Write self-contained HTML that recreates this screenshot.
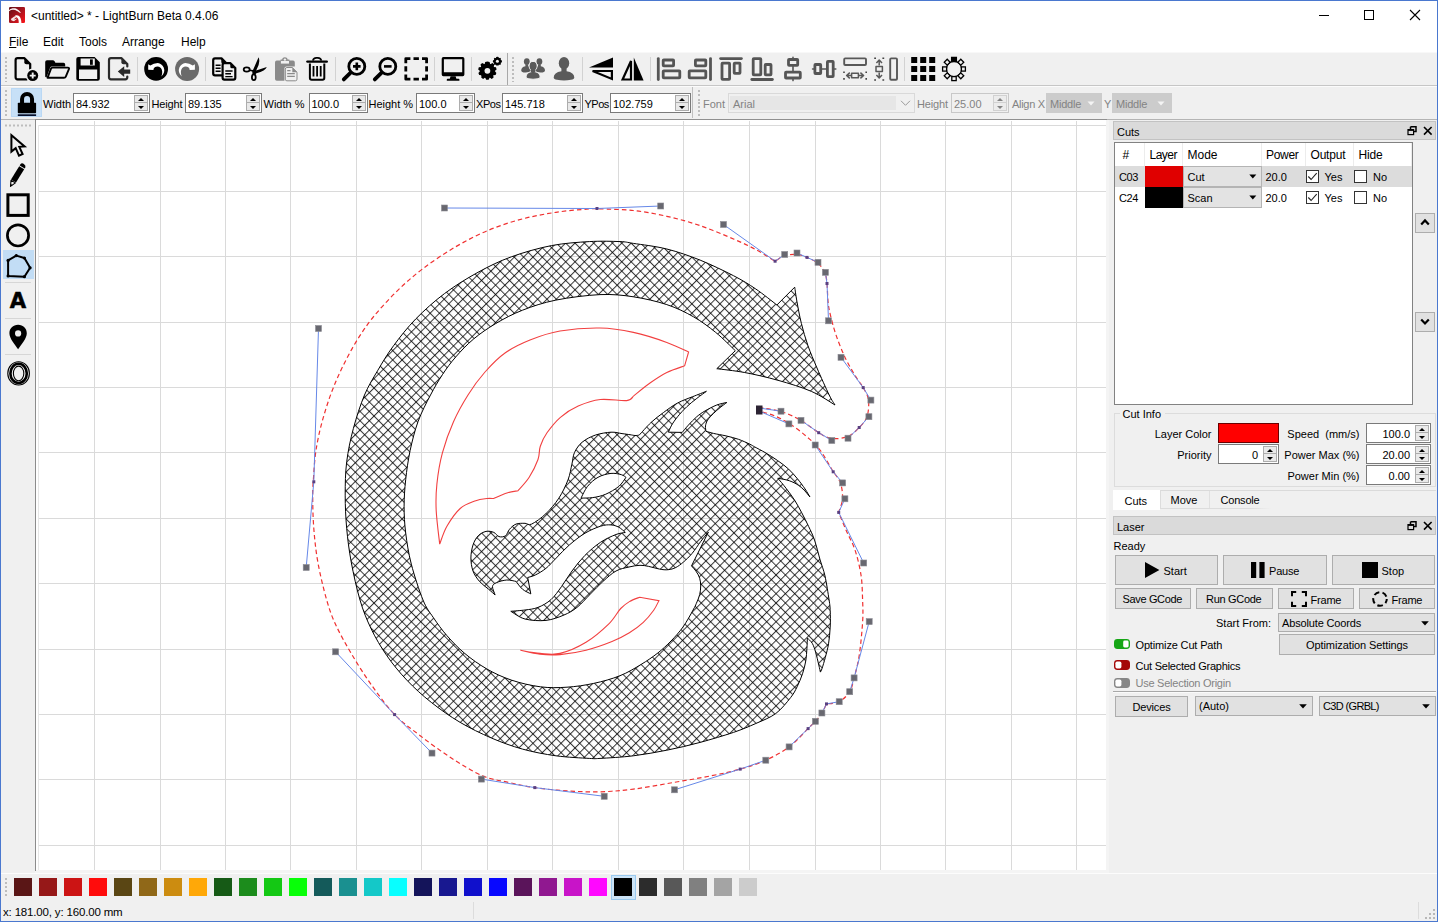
<!DOCTYPE html>
<html lang="en"><head><meta charset="utf-8"><title>LightBurn</title>
<style>
html,body{margin:0;padding:0;background:#f0f0f0;}
body{width:1438px;height:922px;overflow:hidden;font-family:"Liberation Sans",sans-serif;font-size:11px;color:#000;}
#win{position:relative;width:1438px;height:922px;background:#f0f0f0;overflow:hidden;}
.abs{position:absolute;}
.t{position:absolute;white-space:nowrap;line-height:1;}
.t11{font-size:11px;}
.t12{font-size:12px;}
.t13{font-size:13px;}
.gray{color:#838383;}
svg{position:absolute;overflow:visible;}
.spin{position:absolute;background:#fff;border:1px solid #7a7a7a;box-sizing:border-box;height:20px;}
.spin .v{position:absolute;left:2px;top:5px;font-size:11px;line-height:11px;white-space:nowrap;}
.spin .vr{position:absolute;right:20px;top:4px;font-size:11px;line-height:11px;white-space:nowrap;}
.spin .ud{position:absolute;right:1px;top:1px;width:14px;height:16px;}
.spin .ud i{position:absolute;left:0;width:12px;height:6px;border:1px solid #adadad;background:#e9e9e9;}
.spin .ud i.u{top:0;}
.spin .ud i.d{top:7px;height:7px;}
.spin .ud i:after{content:"";position:absolute;left:3px;top:1.5px;border-left:3px solid transparent;border-right:3px solid transparent;}
.spin .ud i.u:after{border-bottom:3px solid #000;}
.spin .ud i.d:after{border-top:3px solid #000;top:2.5px;}
.btn{position:absolute;box-sizing:border-box;background:#e1e1e1;border:1px solid #adadad;}
.sepv{position:absolute;width:1px;background:#d4d4d4;}
.grip{position:absolute;width:2px;}

</style></head>
<body>
<div id="win">
<!-- window frame -->
<div class="abs" style="left:0;top:0;width:1438px;height:52px;background:#fff;"></div>
<div class="abs" style="left:0;top:0;width:1438px;height:1px;background:#4a78cf;"></div>
<div class="abs" style="left:0;top:0;width:1px;height:922px;background:#4a78cf;"></div>
<div class="abs" style="left:1437px;top:0;width:1px;height:922px;background:#4a78cf;"></div>
<div class="abs" style="left:0;top:921px;width:1438px;height:1px;background:#4a78cf;"></div>
<!-- app icon -->
<svg style="left:9px;top:7px" width="16" height="16" viewBox="0 0 16 16">
  <defs><linearGradient id="ig" x1="0" y1="0" x2="1" y2="1"><stop offset="0" stop-color="#5e1016"/><stop offset="0.55" stop-color="#b0141e"/><stop offset="1" stop-color="#ff1418"/></linearGradient></defs>
  <rect x="0" y="0" width="16" height="16" rx="1.3" fill="url(#ig)"/>
  <path d="M0 3.2C2 1 6.5 0.6 8.6 2.5C10.2 3.6 11.4 4.8 11.9 5.9C10.4 5.6 9.5 4.7 8 3.9C5.5 2.5 2.5 2.4 0 4.2Z" fill="#fbf3f3"/>
  <path d="M6.2 8.4C8.5 7.6 10.7 8.6 11.5 11C12.2 13 12.4 14.6 12.4 16L9.7 16C9.9 14 9.5 12.2 8.5 11C7.9 10.3 7 9.9 6.2 9.9Z" fill="#fff"/>
  <path d="M1.8 12L5.6 9.3L7.2 10.4L4.6 12.5L8.4 11.6L5 14.3L2.6 13.6Z" fill="#f6e4e4"/>
</svg>
<div class="t t12" style="left:31px;top:10px;">&lt;untitled&gt; * - LightBurn Beta 0.4.06</div>
<!-- window buttons -->
<div class="abs" style="left:1319px;top:15px;width:10px;height:1px;background:#000;"></div>
<div class="abs" style="left:1364px;top:10px;width:8px;height:8px;border:1px solid #000;"></div>
<svg style="left:1409px;top:9px" width="12" height="12" viewBox="0 0 12 12"><path d="M1 1 L11 11 M11 1 L1 11" stroke="#000" stroke-width="1.1" fill="none"/></svg>
<!-- menu -->
<div class="t t12" style="left:9px;top:36px;"><span style="text-decoration:underline">F</span>ile</div>
<div class="t t12" style="left:43px;top:36px;">Edit</div>
<div class="t t12" style="left:79px;top:36px;">Tools</div>
<div class="t t12" style="left:122px;top:36px;">Arrange</div>
<div class="t t12" style="left:181px;top:36px;">Help</div>

<!-- toolbar 1 -->
<div class="abs" style="left:1px;top:52px;width:1436px;height:1px;background:#f8f8f8;"></div>
<div class="abs" style="left:1px;top:85px;width:1436px;height:1px;background:#c6c6c6;"></div>
<div class="abs" style="left:1px;top:86px;width:1436px;height:1px;background:#fbfbfb;"></div>
<div class="abs" style="left:507px;top:53px;width:1px;height:32px;background:#a8a8a8;"></div>
<svg style="left:0;top:52px" width="1100" height="36" viewBox="0 52 1100 36">
<g fill="#bdbdbd">
<path d="M5 57h2v2h-2zM5 61h2v2h-2zM5 65h2v2h-2zM5 69h2v2h-2zM5 73h2v2h-2zM5 77h2v2h-2zM5 81h2v1h-2z"/>
<path d="M512 57h2v2h-2zM512 61h2v2h-2zM512 65h2v2h-2zM512 69h2v2h-2zM512 73h2v2h-2zM512 77h2v2h-2zM512 81h2v1h-2z"/>
</g>
<g stroke="#d2d2d2" stroke-width="1" shape-rendering="crispEdges">
<path d="M137.5 57V81M205.5 57V81M335.5 57V81M434.5 57V81M471.5 57V81M582.5 57V81M650.5 57V81M904.5 57V81"/>
</g>
<!-- new -->
<g fill="none" stroke="#000" stroke-width="2.2" stroke-linejoin="round" stroke-linecap="round">
<path d="M27 79.3H17.6Q15.6 79.3 15.6 77.3V60.2Q15.6 58.2 17.6 58.2H24.5L30.2 64V69.5"/>
</g>
<path d="M24.3 58.3L30.2 64.2H26.3Q24.3 64.2 24.3 62.2Z" fill="#000"/>
<circle cx="32.7" cy="75.6" r="7" fill="#f0f0f0"/><circle cx="32.7" cy="75.6" r="5.5" fill="#000"/>
<path d="M32.7 72.6V78.6M29.7 75.6H35.7" stroke="#f0f0f0" stroke-width="1.9" fill="none"/>
<!-- open -->
<path d="M45.2 76.6V62Q45.2 60.2 47 60.2H52.8Q54 60.2 54.6 61.3L55.4 62.7H63.5Q65.2 62.7 65.2 64.4V66.4H52Q50.6 66.4 50.1 67.7L46.6 77.3Q45.2 77.6 45.2 76.6Z" fill="#000"/>
<path d="M47.5 77.8L51 68.6Q51.4 67.6 52.5 67.6H67.8Q69.5 67.6 68.9 69.2L65.8 76.6Q65.3 77.8 64 77.8Z" fill="none" stroke="#000" stroke-width="1.9" stroke-linejoin="round"/>
<!-- save -->
<path d="M78.3 57H94.6L99.8 62.2V78.8Q99.8 80.8 97.8 80.8H78.3Q76.3 80.8 76.3 78.8V59Q76.3 57 78.3 57ZM80.6 58.6V65.6H94.8V58.6ZM79 69.5V78.9H97.2V69.5Z" fill="#000" fill-rule="evenodd"/>
<rect x="90" y="59.4" width="2.8" height="5.4" fill="#000"/>
<!-- import -->
<g fill="none" stroke="#2a2a2a" stroke-width="2.2" stroke-linejoin="round" stroke-linecap="round">
<path d="M127.3 76.5V77.3Q127.3 79.3 125.3 79.3H111Q109 79.3 109 77.3V60.2Q109 58.2 111 58.2H121.6L127.3 64V66.5"/>
</g>
<path d="M121.4 58.3L127.3 64.2H123.4Q121.4 64.2 121.4 62.2Z" fill="#2a2a2a"/>
<path d="M117.8 71.6L124.2 66.3V69.5H130.2V73.7H124.2V76.9Z" fill="#2a2a2a"/>
<!-- undo -->
<circle cx="156.1" cy="68.9" r="11.9" fill="#000"/>
<path d="M148.2 64.2L150.3 65.4Q153.6 62.9 157.8 62.9Q161.8 63.4 163.7 67.4Q165.6 72 161.4 76.5Q163.3 71 160.9 68Q158 65.7 155.1 67Q153.4 68 153.4 69.9L148.2 69.7Z" fill="#fff"/>
<!-- redo -->
<circle cx="187.1" cy="69" r="12" fill="#6a6a6a"/>
<path d="M148.2 64.2L150.3 65.4Q153.6 62.9 157.8 62.9Q161.8 63.4 163.7 67.4Q165.6 72 161.4 76.5Q163.3 71 160.9 68Q158 65.7 155.1 67Q153.4 68 153.4 69.9L148.2 69.7Z" fill="#fff" transform="translate(343.1,0) scale(-1,1)"/>
<!-- copy -->
<g fill="#f0f0f0" stroke="#000" stroke-width="2.2" stroke-linejoin="round">
<path d="M215 58.4H221.5L226.4 63.3V73.5Q226.4 75.3 224.6 75.3H215Q213.2 75.3 213.2 73.5V60.2Q213.2 58.4 215 58.4Z"/>
<path d="M224.4 63.2H230.5L235.3 68V77.8Q235.3 79.6 233.5 79.6H224.4Q222.6 79.6 222.6 77.8V65Q222.6 63.2 224.4 63.2Z"/>
</g>
<path d="M221.3 58.5L226.3 63.5H222.8Q221.3 63.5 221.3 62ZM230.3 63.3L235.2 68.2H231.8Q230.3 68.2 230.3 66.7Z" fill="#000"/>
<path d="M215.6 65.3H220.6M215.6 68.3H220.6M215.6 71.3H220.6M225.3 71H232.6M225.3 73.8H231M225.3 76.6H232.6" stroke="#000" stroke-width="1.4" fill="none"/>
<!-- scissors -->
<g fill="none" stroke="#000" stroke-width="1.8">
<ellipse cx="246.7" cy="69.5" rx="3" ry="2.1"/>
<ellipse cx="253.8" cy="77.2" rx="1.9" ry="2.9"/>
</g>
<path d="M249.6 69.4L253 70L258.6 57.3Q260.8 62.6 256.2 70.6L266.8 66.9Q265.6 70.6 256.4 73.2L255.2 74.6L252.6 74.4L252.2 71.6L249.4 71Z" fill="#000"/>
<!-- paste -->
<path d="M276.8 60.6H280.6V59.6H282.2C282.4 56.6 287.4 56.6 287.6 59.6H289.4V60.6H293Q294.8 60.6 294.8 62.4V66.5H286.5Q284.4 66.5 284.4 68.6V80.8H276.8Q275 80.8 275 79V62.4Q275 60.6 276.8 60.6Z" fill="#8a8a8a"/>
<circle cx="284.9" cy="59.6" r="1.2" fill="#f0f0f0"/>
<path d="M280.9 60.9H289V63.6H280.9Z" fill="#f0f0f0"/>
<path d="M286.9 67.5H292.3L297 72.2V79.2Q297 80.8 295.4 80.8H286.9Q285.3 80.8 285.3 79.2V69.1Q285.3 67.5 286.9 67.5Z" fill="#f0f0f0" stroke="#8a8a8a" stroke-width="1"/>
<path d="M292.3 67.5L297 72.2H292.3Z" fill="#8a8a8a"/>
<path d="M287.2 70.6H290.5M287.2 73.6H294.8M287.2 76.4H294.8" stroke="#8a8a8a" stroke-width="1.3" fill="none"/>
<!-- trash -->
<path d="M312.9 60.6Q313.4 57.8 316.3 57.8H317.9Q320.8 57.8 321.3 60.6" fill="none" stroke="#000" stroke-width="1.8"/>
<path d="M307.4 61.6H326.8" stroke="#000" stroke-width="2.4" fill="none" stroke-linecap="round"/>
<path d="M309.9 63.4V78Q309.9 79.8 311.7 79.8H322.5Q324.3 79.8 324.3 78V63.4" fill="none" stroke="#000" stroke-width="2"/>
<path d="M313.5 66V76.6M317.1 66V76.6M320.7 66V76.6" stroke="#000" stroke-width="1.8" fill="none"/>
<!-- zoom in -->
<g fill="none" stroke="#000">
<circle cx="356.8" cy="66.4" r="8" stroke-width="2.8"/>
<path d="M350.4 72.8L343.8 79.4" stroke-width="3.8" stroke-linecap="round"/>
<path d="M356.8 62.6V70.2M353 66.4H360.6" stroke-width="2.6"/>
<circle cx="387.8" cy="66.4" r="8" stroke-width="2.8"/>
<path d="M381.4 72.8L374.8 79.4" stroke-width="3.8" stroke-linecap="round"/>
<path d="M384 66.4H391.6" stroke-width="2.6"/>
</g>
<!-- frame select -->
<path d="M405.8 63.2V58.6H410.40000000000003M413.5 58.6H418.9M422.0 58.6H426.6V63.2M426.6 66.2V71.6M426.6 74.60000000000001V79.2H422.0M418.9 79.2H413.5M410.40000000000003 79.2H405.8V74.60000000000001M405.8 71.6V66.2" fill="none" stroke="#000" stroke-width="2.8" stroke-linejoin="round"/>
<!-- monitor -->
<path d="M443.4 57H462.7Q464.4 57 464.4 58.7V74.6Q464.4 76.3 462.7 76.3H443.4Q441.7 76.3 441.7 74.6V58.7Q441.7 57 443.4 57ZM443.9 59.2V72.2H462.2V59.2Z" fill="#000" fill-rule="evenodd"/>
<path d="M450.6 76.3H455.6L456.4 78.8H458.6Q459.4 78.8 459.4 79.6V80.8H446.8V79.6Q446.8 78.8 447.6 78.8H449.8Z" fill="#000"/>
<!-- gears -->
<g fill="#000">
<path id="gearb" d="M485.6 63.3L488.4 63.1L489.3 65.2L491.7 63.9L493.7 65.9L492.4 68.3L494.5 69.2L494.3 72L492.1 72.7L493.1 75.2L490.9 77L488.7 75.5L487.4 77.5L484.7 77L484.3 74.7L481.7 75.4L480.2 73L482 71.1L480.1 69.6L481 67L483.4 67L483.1 64.4Z" transform="translate(0,0.6)"/>
<circle cx="487.4" cy="70.8" r="7" />
<path d="M487.4 61.6L489.6 61.9L490.2 64.2L492.6 63L494.3 64.5L493.6 66.9L496 67.3L496.6 69.5L494.8 71.1L496.4 72.9L495.6 75L493.2 75.2L493.6 77.6L491.7 78.9L489.7 77.6L488.6 79.8H486.2L485.1 77.6L483.1 78.9L481.2 77.6L481.6 75.2L479.2 75L478.4 72.9L480 71.1L478.2 69.5L478.8 67.3L481.2 66.9L480.5 64.5L482.2 63L484.6 64.2L485.2 61.9Z"/>
<circle cx="497.4" cy="61.3" r="3.4"/>
<path d="M497.4 56.8L498.6 57.1L498.9 58.3L500.1 57.8L501 58.7L500.5 59.9L501.7 60.2L502 61.3L501.7 62.5L500.5 62.8L501 64L500.1 64.9L498.9 64.4L498.6 65.6H496.2L495.9 64.4L494.7 64.9L493.8 64L494.3 62.8L493.1 62.5L492.8 61.3L493.1 60.2L494.3 59.9L493.8 58.7L494.7 57.8L495.9 58.3L496.2 57.1Z"/>
</g>
<circle cx="487.4" cy="70.8" r="2.9" fill="#f0f0f0"/>
<circle cx="497.4" cy="61.3" r="1.5" fill="#f0f0f0"/>
<!-- group -->
<g fill="#5a5a5a">
<ellipse cx="526.8" cy="61.6" rx="2.9" ry="3.4"/>
<path d="M521.2 70.6Q521.2 67 525.4 66.3V64.5H528.2V66.3Q532 67 532 70.6Q529 73 523.6 72.4Q521.2 72 521.2 70.6Z"/>
<ellipse cx="539.4" cy="61.6" rx="2.9" ry="3.4"/>
<path d="M545 70.6Q545 67 540.8 66.3V64.5H538V66.3Q534.2 67 534.2 70.6Q537.2 73 542.6 72.4Q545 72 545 70.6Z"/>
</g>
<g fill="#5a5a5a" stroke="#f0f0f0" stroke-width="1.1">
<ellipse cx="533.1" cy="66" rx="3.9" ry="4.6"/>
<path d="M526 77Q526 72.6 531.2 71.7V69.6H535V71.7Q540.2 72.6 540.2 77Q540.2 78.4 538 78.8Q533.1 79.6 528.2 78.8Q526 78.4 526 77Z"/>
</g>
<ellipse cx="533.1" cy="66" rx="3.4" ry="4.1" fill="#5a5a5a"/>
<path d="M530.9 69H535.3V72.4H530.9Z" fill="#5a5a5a"/>
<!-- user -->
<g fill="#5a5a5a">
<ellipse cx="564" cy="63.2" rx="5.2" ry="6.2"/>
<path d="M561.4 67.6H566.6V71.2Q574.3 72.4 574.3 77.4Q574.3 79.2 571 79.8Q564 81 557 79.8Q553.7 79.2 553.7 77.4Q553.7 72.4 561.4 71.2Z"/>
</g>
<!-- flip h -->
<path d="M589 67.6L613 57.4V67.6Z" fill="#000"/>
<path d="M592.6 71H611.9V78.9Z" fill="none" stroke="#000" stroke-width="2.2" stroke-linejoin="miter"/>
<!-- flip v -->
<path d="M631 61V79.5H622.6Z" fill="none" stroke="#000" stroke-width="2.2"/>
<path d="M633.8 57.4V80.6H643.6Z" fill="#000"/>
<!-- align icons -->
<g fill="none" stroke="#555" stroke-width="2.8" stroke-linejoin="round" stroke-linecap="round">
<path d="M658.3 58.6V79.6"/>
<rect x="663.2" y="60" width="10.4" height="5.8" rx="0.6"/>
<rect x="663.2" y="70.8" width="16.6" height="7" rx="0.6"/>
<path d="M710.5 58.6V79.6"/>
<rect x="695.4" y="60" width="10.4" height="5.8" rx="0.6"/>
<rect x="689.2" y="70.8" width="16.6" height="7" rx="0.6"/>
<path d="M720.6 58.6H741.4"/>
<rect x="722" y="63.2" width="7.6" height="16.2" rx="0.6"/>
<rect x="734.2" y="63.2" width="5.8" height="10.2" rx="0.6"/>
<path d="M751.8 79.5H772.4"/>
<rect x="753.2" y="58.6" width="7.6" height="16.2" rx="0.6"/>
<rect x="765.2" y="64.5" width="5.8" height="10.3" rx="0.6"/>
<path d="M793 57.4V59M793 66.6V71M793 79V80.6" stroke-width="1.6"/>
<rect x="788.5" y="59.5" width="9.2" height="5.8" rx="0.6"/>
<rect x="785.5" y="72.2" width="14.8" height="5.8" rx="0.6"/>
<path d="M812.6 69H814M822 69H826M834.4 69H835.8" stroke-width="1.6"/>
<rect x="814.9" y="64.5" width="5.8" height="9" rx="0.6"/>
<rect x="827.4" y="61.3" width="5.8" height="15.4" rx="0.6"/>
</g>
<!-- distribute h -->
<g fill="none" stroke="#585858" stroke-linejoin="round">
<rect x="844.2" y="58.4" width="21.8" height="6.6" rx="1" stroke-width="1.9"/>
<rect x="851.6" y="73.2" width="6.8" height="4.6" stroke-width="1.5"/>
<path d="M849.8 72.6L846.6 75.5L849.8 78.4M846.6 75.5H851M860.4 72.6L863.6 75.5L860.4 78.4M863.6 75.5H859" stroke-width="1.5"/>
<path d="M844 71.4V73M844 78V79.8M866.2 71.4V73M866.2 78V79.8" stroke-width="1.6" stroke="#444"/>
<!-- distribute v -->
<rect x="890.2" y="58.4" width="6.8" height="21.4" rx="1" stroke-width="1.9"/>
<rect x="876" y="66.4" width="6.4" height="5.2" stroke-width="1.5"/>
<path d="M876.4 63L879.2 60L882 63M879.2 60V65.6M876.4 75L879.2 78L882 75M879.2 78V72.4" stroke-width="1.5"/>
<path d="M874.2 58.2H876M882.4 58.2H884.2M874.2 80H876M882.4 80H884.2" stroke-width="1.6" stroke="#444"/>
</g>
<!-- grid array -->
<g fill="#000">
<rect x="911.2" y="57" width="6" height="6"/><rect x="920.2" y="57" width="6" height="6"/><rect x="929.2" y="57" width="6" height="6"/>
<rect x="911.2" y="66" width="6" height="6"/><rect x="920.2" y="66" width="6" height="6"/><rect x="929.2" y="66" width="6" height="6"/>
<rect x="911.2" y="75" width="6" height="6"/><rect x="920.2" y="75" width="6" height="6"/><rect x="929.2" y="75" width="6" height="6"/>
</g>
<!-- circular array -->
<circle cx="954" cy="69" r="7.6" fill="none" stroke="#000" stroke-width="1.25"/>
<g fill="#f0f0f0" stroke="#000" stroke-width="1.3">
<rect x="951.6" y="57.4" width="4.8" height="4.2" fill="#000"/>
<rect x="951.8" y="76.6" width="4.4" height="4"/>
<rect x="942.6" y="66.9" width="4" height="4.2"/>
<rect x="961.4" y="66.9" width="4" height="4.2"/>
<rect x="-2.1" y="-2.1" width="4.2" height="4.2" transform="translate(947.2,62.2) rotate(45)"/>
<rect x="-2.1" y="-2.1" width="4.2" height="4.2" transform="translate(960.8,62.2) rotate(45)"/>
<rect x="-2.1" y="-2.1" width="4.2" height="4.2" transform="translate(947.2,75.8) rotate(45)"/>
<rect x="-2.1" y="-2.1" width="4.2" height="4.2" transform="translate(960.8,75.8) rotate(45)"/>
</g>
</svg>

<!-- toolbar 2 -->
<div class="abs" style="left:1px;top:119px;width:1436px;height:1px;background:#b4b4b4;"></div>
<div class="abs" style="left:692px;top:87px;width:1px;height:31px;background:#c0c0c0;"></div>
<div class="abs" style="left:5px;top:90px;width:2px;height:2px;background:#bdbdbd;"></div><div class="abs" style="left:5px;top:94px;width:2px;height:2px;background:#bdbdbd;"></div><div class="abs" style="left:5px;top:99px;width:2px;height:2px;background:#bdbdbd;"></div><div class="abs" style="left:5px;top:102px;width:2px;height:2px;background:#bdbdbd;"></div><div class="abs" style="left:5px;top:106px;width:2px;height:2px;background:#bdbdbd;"></div><div class="abs" style="left:5px;top:110px;width:2px;height:2px;background:#bdbdbd;"></div><div class="abs" style="left:5px;top:114px;width:2px;height:2px;background:#bdbdbd;"></div>
<div class="abs" style="left:698px;top:90px;width:2px;height:2px;background:#bdbdbd;"></div><div class="abs" style="left:698px;top:94px;width:2px;height:2px;background:#bdbdbd;"></div><div class="abs" style="left:698px;top:99px;width:2px;height:2px;background:#bdbdbd;"></div><div class="abs" style="left:698px;top:102px;width:2px;height:2px;background:#bdbdbd;"></div><div class="abs" style="left:698px;top:106px;width:2px;height:2px;background:#bdbdbd;"></div><div class="abs" style="left:698px;top:110px;width:2px;height:2px;background:#bdbdbd;"></div><div class="abs" style="left:698px;top:114px;width:2px;height:2px;background:#bdbdbd;"></div>
<div class="abs" style="left:11px;top:88px;width:31px;height:29px;box-sizing:border-box;background:#c7e0f7;border:1px solid #bad8f4;"></div>
<svg style="left:11px;top:88px" width="31" height="29" viewBox="11 88 31 29">
<path d="M22.05 103.4V98.9A5 5 0 0 1 32.05 98.9V103.4" fill="none" stroke="#000" stroke-width="4"/>
<rect x="17.8" y="102.8" width="18.3" height="10.4" rx="0.8" fill="#000"/>
<rect x="17.8" y="114.3" width="18.3" height="1.7" fill="#08102c"/>
</svg>
<div class="t t11 " style="left:43px;top:99px;">Width</div>
<div class="spin" style="left:73px;top:93px;width:77px;"><span class="v">84.932</span><span class="ud"><i class="u"></i><i class="d"></i></span></div>
<div class="t t11 " style="left:151.5px;top:99px;letter-spacing:-0.15px;">Height</div>
<div class="spin" style="left:185px;top:93px;width:77px;"><span class="v">89.135</span><span class="ud"><i class="u"></i><i class="d"></i></span></div>
<div class="t t11 " style="left:263.5px;top:99px;">Width %</div>
<div class="spin" style="left:308.5px;top:93px;width:59px;"><span class="v">100.0</span><span class="ud"><i class="u"></i><i class="d"></i></span></div>
<div class="t t11 " style="left:368.5px;top:99px;">Height %</div>
<div class="spin" style="left:416px;top:93px;width:59px;"><span class="v">100.0</span><span class="ud"><i class="u"></i><i class="d"></i></span></div>
<div class="t t11 " style="left:476px;top:99px;letter-spacing:-0.4px;">XPos</div>
<div class="spin" style="left:502px;top:93px;width:81px;"><span class="v">145.718</span><span class="ud"><i class="u"></i><i class="d"></i></span></div>
<div class="t t11 " style="left:584.5px;top:99px;letter-spacing:-0.5px;">YPos</div>
<div class="spin" style="left:610px;top:93px;width:81px;"><span class="v">102.759</span><span class="ud"><i class="u"></i><i class="d"></i></span></div>
<div class="t t11 gray" style="left:703px;top:99px;">Font</div>
<div class="abs" style="left:728px;top:93px;width:187px;height:20px;box-sizing:border-box;border:1px solid #d9d9d9;background:#f0f0f0;"><div class="abs" style="left:1px;top:2px;width:166px;height:14px;background:#e6e6e6;"></div><div class="t t11 gray" style="left:4px;top:5px;">Arial</div><svg style="left:171px;top:6px" width="11" height="7" viewBox="0 0 11 7"><path d="M1 0.8L5.5 5.3L10 0.8" fill="none" stroke="#9a9a9a" stroke-width="1"/></svg></div>
<div class="t t11 gray" style="left:917px;top:99px;letter-spacing:-0.15px;">Height</div>
<div class="spin" style="left:951px;top:93px;width:58px;border-color:#c8c8c8;background:#f0f0f0;"><span class="v" style="color:#838383">25.00</span><span class="ud" style="opacity:.45"><i class="u"></i><i class="d"></i></span></div>
<div class="t t11 gray" style="left:1012px;top:99px;letter-spacing:-0.3px;">Align X</div>
<div class="abs" style="left:1046px;top:93px;width:56px;height:20px;background:#cccccc;"><div class="t t11" style="left:4px;top:6px;color:#838383;letter-spacing:-0.2px">Middle</div><svg style="left:41px;top:8px" width="8" height="5" viewBox="0 0 8 5"><path d="M0.5 0.5H7.5L4 4.5Z" fill="#f4f4f4"/></svg></div>
<div class="t t11 gray" style="left:1104px;top:99px;">Y</div>
<div class="abs" style="left:1112px;top:93px;width:60px;height:20px;background:#cccccc;"><div class="t t11" style="left:4px;top:6px;color:#838383;letter-spacing:-0.2px">Middle</div><svg style="left:45px;top:8px" width="8" height="5" viewBox="0 0 8 5"><path d="M0.5 0.5H7.5L4 4.5Z" fill="#f4f4f4"/></svg></div>

<!-- left tools -->
<div class="abs" style="left:3px;top:250px;width:31px;height:29px;background:#c2ddf5;"></div>
<svg style="left:0;top:120px" width="36" height="280" viewBox="0 120 36 280">
<path d="M5 124.5h2v2h-2zM9 124.5h2v2h-2zM13 124.5h2v2h-2zM17 124.5h2v2h-2zM21 124.5h2v2h-2zM25 124.5h2v2h-2zM29 124.5h2v2h-2z" fill="#bdbdbd"/>
<path d="M5 282.5H31M5 318.5H31M5 354.5H31" stroke="#d6d6d6" stroke-width="1" shape-rendering="crispEdges"/>
<!-- pointer -->
<path d="M11.4 135.2V151.6L15.7 148.2L19 155.6L22.6 154L19.3 146.8L24.6 146.4Z" fill="none" stroke="#000" stroke-width="2" stroke-linejoin="miter"/>
<!-- pencil -->
<path d="M20.3 164.4Q21.6 162.6 23.9 163.9Q26.2 165.4 25.3 167.4L24.7 168.4L19.7 165.4Z" fill="#000"/>
<path d="M19.2 166.2L24.2 169.2L16 182.6L11 179.6Z" fill="#000"/>
<path d="M11 180.2L15.4 182.9L10.5 186.4Z" fill="#f0f0f0" stroke="#000" stroke-width="1.1" stroke-linejoin="round"/>
<path d="M10.5 186.4L10.7 184L12.6 185.1Z" fill="#000"/>
<!-- square -->
<rect x="7.9" y="194.8" width="20.3" height="20.6" fill="none" stroke="#000" stroke-width="3"/>
<!-- circle -->
<circle cx="18" cy="235.4" r="10.6" fill="none" stroke="#000" stroke-width="2.7"/>
<!-- polygon -->
<path d="M8.1 260.4L16.3 255.6L24.4 258L30.1 267.8L24.4 276.7L8.1 275.9Z" fill="none" stroke="#000" stroke-width="2" stroke-linejoin="round"/>
<g fill="#000"><circle cx="8.1" cy="260.4" r="1.6"/><circle cx="16.3" cy="255.6" r="1.6"/><circle cx="24.4" cy="258" r="1.6"/><circle cx="30.1" cy="267.8" r="1.6"/><circle cx="24.4" cy="276.7" r="1.6"/><circle cx="8.1" cy="275.9" r="1.6"/></g>
<!-- text tool -->
<text x="18" y="308.4" text-anchor="middle" font-family="'DejaVu Sans',sans-serif" font-weight="bold" font-size="21.2px" fill="#000" stroke="#000" stroke-width="0.5">A</text>
<!-- pin -->
<path d="M18.1 324.8C23.2 324.8 26.8 328.4 26.8 333.2C26.8 338.6 21.2 344.4 18.1 349.2C15 344.4 9.4 338.6 9.4 333.2C9.4 328.4 13 324.8 18.1 324.8Z" fill="#000"/>
<circle cx="18.1" cy="333.4" r="3.1" fill="#f0f0f0"/>
<!-- offset -->
<g fill="none" stroke="#000">
<ellipse cx="18.6" cy="373.4" rx="10.8" ry="11.6" stroke-width="1.1"/>
<ellipse cx="18.6" cy="373.4" rx="8.2" ry="9.6" stroke-width="2.6"/>
<ellipse cx="18.6" cy="373.4" rx="5.2" ry="7.3" stroke-width="1.1"/>
</g>
</svg>

<!-- canvas -->
<div class="abs" style="left:35px;top:120px;width:1074px;height:753px;background:#f4f4f4;"></div>
<div class="abs" style="left:1px;top:873px;width:1436px;height:1px;background:#fcfcfc;"></div>
<div class="abs" style="left:35px;top:120px;width:1px;height:751px;background:#8c8c8c;"></div>

<div class="abs" id="cvtop" style="left:35px;top:119px;width:1072px;height:1px;background:#909090;z-index:2"></div>
<div class="abs" id="cv" style="left:36px;top:120px;width:1070px;height:750px;background:#fff;overflow:hidden;">
<svg id="art" style="left:0;top:0" width="1070" height="750" viewBox="36 120 1070 750">
<g id="grid" stroke="#dadada" stroke-width="1" fill="none" shape-rendering="crispEdges">
<path d="M94.5 121V870"/>
<path d="M160.5 121V870"/>
<path d="M225.5 121V870"/>
<path d="M290.5 121V870"/>
<path d="M356.5 121V870"/>
<path d="M421.5 121V870"/>
<path d="M487.5 121V870"/>
<path d="M552.5 121V870"/>
<path d="M618.5 121V870"/>
<path d="M683.5 121V870"/>
<path d="M749.5 121V870"/>
<path d="M815.5 121V870"/>
<path d="M880.5 121V870"/>
<path d="M945.5 121V870"/>
<path d="M1011.5 121V870"/>
<path d="M1076.5 121V870"/>
<path d="M39 125.5H1106"/>
<path d="M39 191.5H1106"/>
<path d="M39 256.5H1106"/>
<path d="M39 322.5H1106"/>
<path d="M39 387.5H1106"/>
<path d="M39 452.5H1106"/>
<path d="M39 518.5H1106"/>
<path d="M39 583.5H1106"/>
<path d="M39 649.5H1106"/>
<path d="M39 714.5H1106"/>
<path d="M39 779.5H1106"/>
<path d="M39 845.5H1106"/>
<path d="M38.5 125V870" stroke="#e6e6e6"/>
</g>
<!--ARTB--><defs><pattern id="hatch" patternUnits="userSpaceOnUse" width="6.611" height="6.611" patternTransform="rotate(45)"><path d="M3.37 0V6.611M0 3.24H6.611" stroke="#000" stroke-width="0.8" fill="none"/></pattern></defs>
<path d="M794.7 287.2C795.1 289.6 795.8 295.2 796.9 301.3C798.0 307.4 799.5 316.1 801.4 323.5C803.2 330.9 805.4 338.4 808.0 345.8C810.6 353.2 813.5 359.8 817.0 368.0C820.5 376.2 826.2 388.8 829.2 395.0C832.2 401.2 834.0 403.3 835.0 405.0C831.1 402.7 820.9 395.5 811.4 391.4C801.9 387.3 789.1 383.4 778.0 380.3C766.9 377.2 754.8 374.4 744.6 372.5C734.4 370.6 721.4 369.3 716.8 368.7L735.3 350.7C732.0 347.6 722.7 338.0 715.7 332.4C708.7 326.8 701.6 321.4 693.5 316.8C685.4 312.2 676.8 307.9 666.8 304.6C656.8 301.3 644.5 298.5 633.4 296.8C622.3 295.1 612.9 294.1 600.0 294.6C587.1 295.2 568.8 297.5 555.9 300.1C543.0 302.7 532.5 306.3 522.5 310.2C512.5 314.1 503.9 318.7 495.8 323.5C487.7 328.3 480.3 333.4 473.6 339.0C466.9 344.6 461.0 350.9 455.8 356.9C450.6 362.8 446.6 368.3 442.4 374.7C438.2 381.1 434.6 387.2 430.5 395.0C426.4 402.8 421.4 412.4 418.0 421.7C414.6 431.0 412.2 441.0 410.1 450.6C408.1 460.2 406.7 470.3 405.7 479.6C404.7 488.9 404.1 497.4 404.1 506.3C404.1 515.2 404.5 523.4 405.7 533.0C406.9 542.6 408.4 552.9 411.3 564.1C414.2 575.3 419.3 591.0 423.0 600.0C426.7 609.0 429.5 611.9 433.5 617.8C437.5 623.7 441.7 629.7 446.9 635.6C452.1 641.5 458.0 647.8 464.7 653.4C471.4 659.0 479.1 664.5 486.9 669.0C494.7 673.5 502.5 677.1 511.4 680.1C520.3 683.1 531.0 685.6 540.3 686.8C549.6 688.0 558.1 687.8 567.0 687.2C575.9 686.6 584.9 685.3 593.7 683.4C602.5 681.5 612.1 678.9 620.0 675.7C627.9 672.6 634.7 668.3 641.0 664.5C647.3 660.7 652.8 656.9 657.8 653.0C662.8 649.1 666.8 645.3 671.0 641.0C675.2 636.7 679.3 632.2 683.0 627.0C686.7 621.8 690.9 614.0 693.1 610.0C695.3 606.0 695.3 605.9 696.4 603.3C697.5 600.7 699.0 597.5 699.7 594.6C700.4 591.7 700.7 588.6 700.7 585.9C700.7 583.2 700.4 580.6 699.7 578.3C699.0 575.9 697.8 573.9 696.4 571.8C695.0 569.7 692.3 566.9 691.5 565.9L708.3 532.2C707.0 533.8 703.4 538.0 700.7 541.5C698.0 545.0 695.0 550.0 692.1 553.4C689.2 556.8 686.1 559.8 683.4 562.1C680.7 564.5 678.3 566.2 675.8 567.5C673.3 568.8 670.9 569.4 668.2 569.7C665.5 570.0 662.8 569.7 659.5 569.1C656.2 568.5 652.0 567.0 648.7 566.4C645.5 565.8 643.3 565.2 640.0 565.3C636.7 565.4 633.0 566.0 629.0 567.0C625.0 568.0 620.3 568.6 616.0 571.0C611.7 573.4 607.3 577.5 603.0 581.4C598.7 585.3 594.3 590.1 590.0 594.4C585.7 598.7 581.3 604.0 577.0 607.4C572.7 610.8 569.2 612.8 564.0 615.0C558.8 617.2 552.5 619.7 546.0 620.4C539.5 621.1 530.9 620.5 525.0 619.0C519.1 617.5 513.2 612.6 510.8 611.3C513.2 611.1 520.5 610.6 525.0 610.0C529.5 609.4 533.7 609.1 538.0 607.4C542.3 605.7 547.1 603.1 551.0 599.6C554.9 596.1 558.0 591.4 561.5 586.6C565.0 581.8 568.1 576.2 572.0 571.0C575.9 565.8 580.2 560.1 585.0 555.3C589.8 550.5 595.3 545.8 600.5 542.3C605.7 538.8 611.9 536.1 616.0 534.5C620.1 532.9 623.8 532.8 625.3 532.4C624.2 531.5 621.2 528.5 618.8 527.2C616.4 526.0 614.0 525.1 611.0 524.9C608.0 524.7 604.8 524.8 600.5 526.2C596.2 527.6 590.2 530.1 585.0 533.2C579.8 536.3 574.1 540.9 569.3 545.0C564.5 549.1 560.2 554.1 556.3 558.0C552.4 561.9 549.4 565.6 545.9 568.4C542.4 571.2 538.5 573.4 535.5 574.9C532.5 576.4 529.0 577.1 527.7 577.5L530.8 593.9C529.4 593.1 525.0 591.3 522.5 589.2C520.0 587.1 517.1 582.7 516.0 581.4C514.5 581.2 510.1 579.8 506.8 580.0C503.5 580.2 498.8 581.6 496.4 582.7C494.0 583.8 492.7 584.6 492.5 586.6C492.3 588.6 494.7 593.5 495.1 594.9C494.0 594.0 491.2 591.5 488.6 589.2C486.0 587.0 482.1 584.4 479.5 581.4C476.9 578.4 474.4 574.9 473.0 571.0C471.6 567.1 470.9 562.3 470.9 558.0C470.9 553.7 471.8 548.7 473.0 545.0C474.2 541.3 476.0 538.1 478.2 535.8C480.4 533.5 483.4 532.0 486.0 531.4C488.6 530.8 491.6 531.5 493.8 532.4C496.0 533.3 497.1 536.0 499.0 536.6C500.9 537.2 503.8 537.0 505.5 535.8C507.2 534.6 507.8 531.2 509.5 529.3C511.2 527.3 513.4 525.1 516.0 524.1C518.6 523.1 522.4 523.3 525.0 523.3C527.6 523.3 528.1 525.7 531.6 524.1C535.1 522.5 541.4 518.0 545.9 513.7C550.4 509.4 555.2 503.7 558.9 498.1C562.6 492.5 565.8 485.5 568.0 479.9C570.2 474.2 570.8 468.8 571.9 464.2C573.0 459.6 572.8 456.2 574.5 452.5C576.2 448.8 578.8 445.0 582.3 442.1C585.8 439.2 590.5 436.8 595.3 435.1C600.1 433.5 606.5 432.4 611.0 432.2C615.5 431.9 618.8 433.2 622.0 433.6C625.2 434.0 627.8 434.4 630.0 434.7C632.2 435.0 633.5 435.4 635.0 435.5C636.5 435.6 638.5 435.2 639.2 435.1C641.2 433.0 646.9 426.4 650.9 422.6C654.9 418.9 658.9 415.9 663.4 412.6C667.9 409.3 672.7 405.6 677.6 403.0C682.5 400.4 687.8 398.6 692.6 396.7C697.4 394.8 704.1 392.2 706.4 391.3C704.8 392.5 700.1 395.8 696.8 398.4C693.5 401.0 690.0 403.6 686.8 406.7C683.6 409.8 680.1 413.6 677.6 416.7C675.1 419.8 673.2 422.5 671.7 425.1C670.2 427.7 669.0 431.0 668.4 432.2L682.2 432.4C683.2 431.2 686.0 427.7 688.4 425.1C690.8 422.5 694.0 419.1 696.8 416.7C699.6 414.3 701.8 412.8 705.1 410.9C708.4 408.9 713.2 406.4 716.8 405.0C720.4 403.6 725.1 402.9 726.8 402.5C725.7 403.3 722.4 405.7 720.2 407.5C718.0 409.3 715.6 411.3 713.5 413.4C711.4 415.5 708.9 418.0 707.6 420.1C706.3 422.2 705.8 424.0 705.5 425.9C705.2 427.8 705.9 430.4 706.0 431.3C707.2 431.6 710.2 432.6 713.5 433.4C716.8 434.2 721.8 434.9 726.0 435.9C730.2 436.9 734.5 437.9 738.5 439.3C742.5 440.7 747.3 443.0 750.0 444.3C752.7 445.6 752.2 445.5 754.7 446.9C757.2 448.3 761.4 450.4 765.2 452.6C769.0 454.9 773.5 457.6 777.4 460.4C781.3 463.1 785.3 466.1 788.6 469.1C791.9 472.1 794.5 475.3 797.3 478.6C800.0 481.9 803.0 485.9 805.1 489.0C807.2 492.1 809.1 495.6 809.9 496.9C809.0 495.8 806.2 492.3 804.3 490.3C802.3 488.3 800.7 486.7 798.2 485.1C795.7 483.5 792.9 482.0 789.5 480.8C786.1 479.6 779.8 478.6 777.8 478.2C779.2 479.9 783.2 484.5 786.0 488.2C788.8 491.9 792.1 496.2 794.7 500.3C797.3 504.4 799.3 508.1 801.6 512.5C803.9 516.9 806.5 521.8 808.6 526.4C810.8 531.0 812.6 534.4 814.5 540.0C816.4 545.6 818.4 553.9 820.1 559.9C821.9 565.9 823.5 569.3 825.0 576.0C826.5 582.7 828.2 594.2 829.1 600.0C830.0 605.8 830.0 606.3 830.2 610.8C830.4 615.3 830.5 621.7 830.2 627.1C829.9 632.5 829.4 638.3 828.6 643.4C827.8 648.5 826.4 653.4 825.3 657.5C824.2 661.6 822.9 665.9 822.1 668.3C821.3 670.7 820.7 671.5 820.4 672.1C820.1 670.9 819.6 668.4 818.8 665.1C818.0 661.8 816.7 655.7 815.6 652.1C814.5 648.5 813.7 645.8 812.3 643.4C810.9 641.0 808.2 638.9 807.4 638.0C807.3 639.8 807.2 645.0 806.9 648.8C806.6 652.6 806.5 656.5 805.8 660.7C805.1 664.9 804.0 669.4 802.5 673.8C801.0 678.1 799.1 682.8 797.1 686.8C795.1 690.8 794.2 693.1 790.6 697.6C787.0 702.1 781.6 709.2 775.8 713.5C770.0 717.8 762.8 720.4 755.8 723.5C748.8 726.6 742.8 729.2 733.5 732.4C724.2 735.5 711.2 739.4 700.1 742.4C689.0 745.4 677.9 748.0 666.8 750.2C655.7 752.4 644.5 754.4 633.4 755.8C622.3 757.2 607.4 758.0 600.0 758.4C592.6 758.8 596.6 758.8 589.3 758.4C581.9 758.0 567.0 757.3 555.9 755.8C544.8 754.2 533.2 752.1 522.5 749.1C511.8 746.1 501.8 742.5 491.4 738.0C481.0 733.5 470.2 728.3 460.2 722.4C450.2 716.5 440.2 709.4 431.3 702.4C422.4 695.4 414.2 687.9 406.8 680.1C399.4 672.3 392.7 664.1 386.8 655.6C380.9 647.1 375.7 638.2 371.2 628.9C366.7 619.6 363.3 611.2 360.0 600.0C356.7 588.8 353.4 573.8 351.2 561.9C349.0 550.0 347.7 539.6 346.7 528.5C345.7 517.4 345.2 506.2 345.2 495.1C345.2 484.0 345.3 472.9 346.7 461.8C348.1 450.7 350.4 439.5 353.4 428.4C356.4 417.3 360.4 404.7 364.5 395.0C368.6 385.3 373.1 378.4 377.9 370.2C382.7 362.0 387.2 354.3 393.5 345.8C399.8 337.3 407.2 327.7 415.7 319.0C424.2 310.3 434.2 301.3 444.6 293.5C455.0 285.7 466.9 278.4 478.0 272.3C489.1 266.2 499.2 261.2 511.4 256.8C523.6 252.4 538.4 248.1 551.4 245.6C564.4 243.1 577.9 242.3 589.3 241.6C600.7 240.9 612.6 241.3 620.0 241.6C627.4 241.9 625.6 242.2 633.4 243.4C641.2 244.6 655.7 246.2 666.8 249.0C677.9 251.8 689.0 255.7 700.1 260.1C711.2 264.6 724.2 270.9 733.5 275.7C742.8 280.5 748.6 284.1 755.8 289.0C763.0 293.9 773.4 302.3 776.9 305.0L794.7 287.2ZM581.0 498.1C582.1 496.2 584.7 489.9 587.5 486.4C590.3 482.9 594.1 479.5 598.0 477.3C601.9 475.1 607.1 473.8 611.0 473.4C614.9 473.0 618.9 474.0 621.4 474.7C623.9 475.4 625.2 476.9 626.0 477.3C624.8 478.8 622.2 483.6 618.8 486.4C615.4 489.2 610.1 492.3 605.8 494.2C601.4 496.1 596.8 497.0 592.7 497.6C588.6 498.2 583.0 498.0 581.0 498.1Z" fill="url(#hatch)" fill-rule="evenodd" stroke="#000" stroke-width="1"/>
<path d="M439.7 544.1C439.1 538.5 436.7 520.7 436.2 510.7C435.7 500.7 435.9 493.6 436.9 484.0C437.9 474.4 439.6 463.3 442.4 452.9C445.2 442.5 449.2 431.3 453.5 421.7C457.8 412.1 462.8 403.3 468.0 395.0C473.2 386.7 478.8 379.0 485.0 372.0C491.2 365.0 497.5 358.3 505.0 353.0C512.5 347.7 520.8 343.7 530.0 340.0C539.2 336.3 548.3 333.0 560.0 331.0C571.7 329.0 587.8 327.8 600.0 328.0C612.2 328.2 622.3 330.0 633.4 332.4C644.5 334.8 657.6 339.1 666.8 342.4C676.0 345.7 685.0 350.4 688.6 352.0L684.6 365.8C681.6 366.9 672.6 369.6 666.8 372.5C661.0 375.4 655.6 379.1 650.0 383.0C644.4 386.9 636.2 393.9 633.4 396.1C632.3 396.9 632.2 400.0 626.7 400.6C621.2 401.2 608.5 398.6 600.4 399.5C592.3 400.4 584.9 403.1 578.2 406.1C571.5 409.1 565.6 412.9 560.4 417.3C555.2 421.8 550.4 428.0 547.0 432.8C543.6 437.6 541.8 441.8 540.3 446.2C538.8 450.6 539.9 454.3 538.0 459.5C536.1 464.7 532.5 472.1 529.2 477.3C525.9 482.5 519.9 488.5 518.0 490.7C516.2 491.1 511.1 491.6 507.0 492.9C502.9 494.2 495.8 497.6 493.6 498.5C492.5 498.5 489.9 498.1 486.9 498.5C483.9 498.9 480.2 499.0 475.8 500.7C471.4 502.4 465.0 504.2 460.2 508.5C455.4 512.8 450.3 520.4 446.9 526.3C443.5 532.2 440.9 541.1 439.7 544.1Z" fill="none" stroke="#f24040" stroke-width="1.1"/>
<path d="M520.4 650.3C523.7 650.8 533.4 652.8 540.0 653.3C546.6 653.8 552.3 655.2 560.0 653.4C567.7 651.6 577.9 647.2 586.0 642.3C594.1 637.4 602.8 629.7 608.6 624.1C614.4 618.5 617.2 612.2 620.7 608.5C624.2 604.8 626.2 603.5 629.4 601.6C632.6 599.7 638.1 597.9 639.8 597.2L658.9 600.7C658.0 602.3 656.3 606.6 653.7 610.2C651.1 613.8 647.3 618.6 643.3 622.4C639.2 626.2 634.6 629.6 629.4 632.8C624.2 636.0 619.2 638.6 612.0 641.5C604.8 644.4 594.7 648.0 586.0 650.2C577.3 652.4 567.7 653.9 560.0 654.6C552.3 655.3 546.6 655.0 540.0 654.3C533.4 653.6 523.7 651.0 520.4 650.3Z" fill="none" stroke="#f24040" stroke-width="1.1"/>
<path d="M759.0 407.5C762.7 408.2 774.0 409.4 781.0 411.5C788.0 413.6 794.7 416.9 801.0 420.4C807.3 423.9 813.6 429.7 818.8 432.7C823.9 435.7 826.9 437.9 831.8 438.5C836.7 439.1 843.4 438.3 848.0 436.5C852.6 434.7 856.0 430.8 859.2 427.5C862.4 424.2 865.5 421.3 867.0 416.7C868.5 412.1 869.1 405.0 868.5 400.1C867.9 395.2 865.3 391.5 863.2 387.6C861.1 383.7 859.0 382.0 855.9 376.9C852.8 371.8 848.1 363.9 844.8 356.9C841.5 349.8 838.3 341.7 835.9 334.6C833.5 327.6 831.6 320.2 830.3 314.6C829.0 309.1 828.5 306.5 828.0 301.3C827.5 296.1 827.5 288.3 827.0 283.5C826.5 278.7 826.2 275.7 824.7 272.3C823.2 268.9 821.0 265.9 818.0 263.4C815.0 260.9 810.5 258.9 807.0 257.4C803.5 255.9 800.7 254.8 797.0 254.5C793.3 254.2 788.4 254.5 784.7 255.6C781.1 256.7 776.7 260.3 775.1 261.2C771.9 259.3 762.7 253.3 755.8 249.6C748.9 245.9 742.8 243.0 733.5 239.0C724.2 235.0 711.1 229.4 700.0 225.6C688.9 221.8 677.9 218.8 666.8 216.3C655.7 213.8 644.5 211.7 633.4 210.5C622.3 209.3 607.4 209.2 600.0 208.9C592.6 208.6 596.6 208.3 589.3 208.9C581.9 209.5 567.0 210.6 555.9 212.3C544.8 214.0 533.6 216.0 522.5 218.9C511.4 221.8 500.2 225.4 489.1 230.0C478.0 234.6 466.9 240.2 455.8 246.7C444.7 253.2 432.4 261.4 422.4 269.0C412.4 276.6 404.0 284.2 395.7 292.4C387.4 300.6 379.2 309.6 372.5 318.0C365.8 326.4 360.7 334.2 355.6 342.6C350.5 351.0 345.8 360.2 341.7 368.6C337.6 377.0 334.4 384.8 331.3 392.9C328.2 401.0 325.6 409.7 323.4 417.2C321.2 424.7 319.5 431.7 318.2 438.1C316.9 444.5 316.1 449.0 315.3 455.4C314.5 461.8 314.0 469.7 313.6 476.3C313.2 482.9 312.7 486.4 312.7 495.1C312.7 503.8 312.9 517.4 313.8 528.5C314.7 539.6 315.7 550.0 317.8 561.9C319.9 573.8 323.7 589.6 326.7 600.0C329.7 610.4 331.5 615.6 335.6 624.5C339.7 633.4 345.3 643.4 351.2 653.4C357.1 663.4 364.0 674.4 371.2 684.6C378.4 694.8 386.4 706.1 394.6 714.6C402.8 723.1 410.8 728.5 420.2 735.7C429.6 742.9 440.9 751.3 451.3 758.0C461.7 764.7 472.9 771.7 482.5 775.8C492.1 779.9 500.5 780.5 509.2 782.5C517.9 784.5 525.2 786.2 534.8 787.6C544.4 789.0 556.1 790.2 567.0 790.9C577.9 791.6 589.3 792.1 600.4 791.8C611.5 791.5 621.2 790.6 633.4 789.1C645.6 787.6 660.4 784.7 673.4 782.5C686.4 780.3 700.2 778.0 711.3 775.8C722.4 773.6 731.1 771.7 740.2 769.1C749.3 766.5 757.6 763.9 765.8 760.2C773.9 756.5 782.0 752.2 789.1 746.9C796.2 741.6 803.7 732.9 808.1 728.6C812.5 724.3 813.1 723.9 815.4 721.3C817.7 718.7 820.0 715.9 821.9 713.0C823.8 710.1 825.7 705.4 826.5 703.9C828.6 703.5 835.3 703.7 839.2 701.7C843.1 699.7 847.2 695.7 849.7 691.7C852.2 687.7 852.5 683.9 854.1 677.9C855.7 671.9 857.8 664.9 859.2 655.6C860.6 646.3 862.0 631.6 862.6 622.3C863.2 613.0 862.9 607.9 862.6 600.0C862.3 592.1 862.3 583.3 861.0 575.0C859.7 566.7 857.5 557.5 855.0 550.0C852.5 542.5 848.7 536.3 846.0 530.0C843.3 523.7 839.9 515.3 838.7 512.4C839.3 510.1 842.2 503.7 842.5 498.8C842.8 493.8 842.0 487.4 840.5 482.9C839.0 478.4 834.4 473.6 833.2 471.8C831.0 468.2 824.5 456.0 820.0 450.0C815.5 444.0 811.0 440.3 806.0 436.0C801.0 431.7 795.2 427.3 790.0 424.0C784.8 420.7 780.2 418.2 775.0 416.0C769.8 413.8 761.7 411.8 759.0 411.0" fill="none" stroke="#f03030" stroke-width="1.2" stroke-dasharray="4.5 3"/>
<path d="M444.5 208.0L597.0 208.5M597.0 208.5L660.7 206.0M723.5 224.5L775.1 261.2M775.1 261.2L784.7 254.5M797.0 253.0L807.0 257.4M807.0 257.4L818.0 262.3M825.4 272.3L827.0 283.5M827.0 283.5L828.5 320.8M841.0 357.3L863.2 387.6M863.2 387.6L870.9 400.1M759.0 408.0L781.0 411.2M759.0 411.0L788.9 423.9M801.0 420.4L818.8 432.7M818.8 432.7L831.8 440.5M848.0 438.2L859.2 427.5M859.2 427.5L868.9 416.7M815.2 445.0L833.2 471.8M833.2 471.8L842.6 482.9M844.9 498.8L838.7 512.4M838.7 512.4L863.7 563.0M869.2 621.6L854.1 677.9M854.1 677.9L849.7 691.7M839.2 701.7L826.5 703.9M826.5 703.9L821.9 713.0M815.4 721.3L808.1 728.6M808.1 728.6L789.1 746.9M765.8 760.2L740.2 769.1M740.2 769.1L674.5 789.8M604.2 796.3L534.8 787.6M534.8 787.6L481.4 779.1M432.0 753.1L394.6 714.6M394.6 714.6L335.6 651.8M306.2 567.5L313.8 481.8M313.8 481.8L318.5 328.5" fill="none" stroke="#6688e8" stroke-width="1"/>
<g fill="#686870" stroke="#8c8c94" stroke-width="0.6"><rect x="657.7" y="203.0" width="6" height="6"/><rect x="720.5" y="221.5" width="6" height="6"/><rect x="781.7" y="251.5" width="6" height="6"/><rect x="794.0" y="250.0" width="6" height="6"/><rect x="815.0" y="259.3" width="6" height="6"/><rect x="822.4" y="269.3" width="6" height="6"/><rect x="825.5" y="317.8" width="6" height="6"/><rect x="838.0" y="354.3" width="6" height="6"/><rect x="778.0" y="408.2" width="6" height="6"/><rect x="785.9" y="420.9" width="6" height="6"/><rect x="798.0" y="417.4" width="6" height="6"/><rect x="812.2" y="442.0" width="6" height="6"/><rect x="828.8" y="437.5" width="6" height="6"/><rect x="845.0" y="435.2" width="6" height="6"/><rect x="865.9" y="413.7" width="6" height="6"/><rect x="867.9" y="397.1" width="6" height="6"/><rect x="839.6" y="479.9" width="6" height="6"/><rect x="841.9" y="495.8" width="6" height="6"/><rect x="860.7" y="560.0" width="6" height="6"/><rect x="866.2" y="618.6" width="6" height="6"/><rect x="851.1" y="674.9" width="6" height="6"/><rect x="846.7" y="688.7" width="6" height="6"/><rect x="836.2" y="698.7" width="6" height="6"/><rect x="818.9" y="710.0" width="6" height="6"/><rect x="812.4" y="718.3" width="6" height="6"/><rect x="786.1" y="743.9" width="6" height="6"/><rect x="762.8" y="757.2" width="6" height="6"/><rect x="671.5" y="786.8" width="6" height="6"/><rect x="601.2" y="793.3" width="6" height="6"/><rect x="478.4" y="776.1" width="6" height="6"/><rect x="429.0" y="750.1" width="6" height="6"/><rect x="332.6" y="648.8" width="6" height="6"/><rect x="303.2" y="564.5" width="6" height="6"/><rect x="315.5" y="325.5" width="6" height="6"/><rect x="441.5" y="205.0" width="6" height="6"/></g>
<g fill="#5a4080"><rect x="773.6" y="259.7" width="3" height="3"/><rect x="805.5" y="255.9" width="3" height="3"/><rect x="825.5" y="282.0" width="3" height="3"/><rect x="861.7" y="386.1" width="3" height="3"/><rect x="817.2" y="431.2" width="3" height="3"/><rect x="857.7" y="426.0" width="3" height="3"/><rect x="831.7" y="470.3" width="3" height="3"/><rect x="837.2" y="510.9" width="3" height="3"/><rect x="825.0" y="702.4" width="3" height="3"/><rect x="806.6" y="727.1" width="3" height="3"/><rect x="738.7" y="767.6" width="3" height="3"/><rect x="533.3" y="786.1" width="3" height="3"/><rect x="393.1" y="713.1" width="3" height="3"/><rect x="312.3" y="480.3" width="3" height="3"/><rect x="595.5" y="207.0" width="3" height="3"/></g>
<rect x="756" y="405.5" width="6.5" height="9" fill="#2c2434"/><!--ARTE-->
</svg>
</div>

<!-- right panel -->
<div class="abs" style="left:1113px;top:121px;width:323px;height:19px;box-sizing:border-box;background:#dadada;border:1px solid #c2c2c2;"></div><div class="t t11" style="left:1117px;top:127px;">Cuts</div><svg style="left:1407px;top:126px" width="10" height="10" viewBox="0 0 10 10"><path d="M3.5 0.8H9V5.6H7M3.5 0.8V3" fill="none" stroke="#000" stroke-width="1.5"/><rect x="1" y="3.6" width="5.6" height="5" fill="none" stroke="#000" stroke-width="1.2"/><path d="M1 4H6.6" stroke="#000" stroke-width="1.8"/></svg><svg style="left:1423px;top:126px" width="10" height="10" viewBox="0 0 10 10"><path d="M1 1L8.6 8.6M8.6 1L1 8.6" stroke="#000" stroke-width="1.6" fill="none"/></svg>
<div class="abs" style="left:1114px;top:142px;width:299px;height:263px;box-sizing:border-box;background:#fff;border:1px solid #828282;"></div>
<div class="abs" style="left:1115px;top:166px;width:297px;height:21px;background:#dcdcdc;"></div>
<div class="abs" style="left:1144px;top:143px;width:1px;height:23px;background:#ececec;"></div>
<div class="abs" style="left:1182px;top:143px;width:1px;height:23px;background:#ececec;"></div>
<div class="abs" style="left:1261px;top:143px;width:1px;height:23px;background:#ececec;"></div>
<div class="abs" style="left:1305px;top:143px;width:1px;height:23px;background:#ececec;"></div>
<div class="abs" style="left:1353px;top:143px;width:1px;height:23px;background:#ececec;"></div>
<div class="abs" style="left:1411px;top:143px;width:1px;height:23px;background:#ececec;"></div>
<div class="t t12" style="left:1122.5px;top:149px;letter-spacing:0">#</div>
<div class="t t12" style="left:1149.5px;top:149px;letter-spacing:-0.5px">Layer</div>
<div class="t t12" style="left:1187.5px;top:149px;letter-spacing:0">Mode</div>
<div class="t t12" style="left:1266px;top:149px;letter-spacing:-0.3px">Power</div>
<div class="t t12" style="left:1310.5px;top:149px;letter-spacing:-0.2px">Output</div>
<div class="t t12" style="left:1358.5px;top:149px;letter-spacing:-0.2px">Hide</div>
<div class="t t11" style="left:1119px;top:172px;letter-spacing:-0.4px">C03</div><div class="abs" style="left:1145px;top:166px;width:38px;height:21px;background:#e00000;"></div><div class="btn" style="left:1183px;top:166px;width:79px;height:21px;border-color:#b4b4b4;background:#e3e3e3"></div><div class="t t11" style="left:1187.5px;top:172px;">Cut</div><svg style="left:1249px;top:174px" width="8" height="5" viewBox="0 0 8 5"><path d="M0.3 0.4H7.3L3.8 4.4Z" fill="#000"/></svg><div class="t t11" style="left:1265.5px;top:172px;">20.0</div><div class="abs" style="left:1306px;top:170px;width:13px;height:13px;box-sizing:border-box;border:1px solid #333;background:#fff;"></div><svg style="left:1306px;top:170px" width="13" height="13" viewBox="0 0 13 13"><path d="M2.3 6.5L5.1 9.5L10.7 3.1" fill="none" stroke="#222" stroke-width="1.1"/></svg><div class="t t11" style="left:1324.5px;top:172px;">Yes</div><div class="abs" style="left:1354px;top:170px;width:13px;height:13px;box-sizing:border-box;border:1px solid #333;background:#fff;"></div><div class="t t11" style="left:1373px;top:172px;">No</div>
<div class="t t11" style="left:1119px;top:193px;letter-spacing:-0.4px">C24</div><div class="abs" style="left:1145px;top:187px;width:38px;height:21px;background:#000;"></div><div class="btn" style="left:1183px;top:187px;width:79px;height:21px;border-color:#b4b4b4;background:#e3e3e3"></div><div class="t t11" style="left:1187.5px;top:193px;">Scan</div><svg style="left:1249px;top:195px" width="8" height="5" viewBox="0 0 8 5"><path d="M0.3 0.4H7.3L3.8 4.4Z" fill="#000"/></svg><div class="t t11" style="left:1265.5px;top:193px;">20.0</div><div class="abs" style="left:1306px;top:191px;width:13px;height:13px;box-sizing:border-box;border:1px solid #333;background:#fff;"></div><svg style="left:1306px;top:191px" width="13" height="13" viewBox="0 0 13 13"><path d="M2.3 6.5L5.1 9.5L10.7 3.1" fill="none" stroke="#222" stroke-width="1.1"/></svg><div class="t t11" style="left:1324.5px;top:193px;">Yes</div><div class="abs" style="left:1354px;top:191px;width:13px;height:13px;box-sizing:border-box;border:1px solid #333;background:#fff;"></div><div class="t t11" style="left:1373px;top:193px;">No</div>
<div class="btn" style="left:1415px;top:213px;width:20px;height:20px;"></div><svg style="left:1420px;top:218px" width="10" height="9" viewBox="0 0 10 9"><path d="M1.2 6.4L5 2.4L8.8 6.4" fill="none" stroke="#000" stroke-width="2.2"/></svg>
<div class="btn" style="left:1415px;top:312px;width:20px;height:20px;"></div><svg style="left:1420px;top:317px" width="10" height="9" viewBox="0 0 10 9"><path d="M1.2 2.4L5 6.4L8.8 2.4" fill="none" stroke="#000" stroke-width="2.2"/></svg>
<div class="abs" style="left:1114px;top:413px;width:322px;height:74px;box-sizing:border-box;border:1px solid #dcdcdc;"></div>
<div class="abs" style="left:1120px;top:408px;width:45px;height:12px;background:#f0f0f0;"></div>
<div class="t t11" style="left:1122.5px;top:408.5px;">Cut Info</div>
<div class="t t11" style="right:226.5px;top:429px;">Layer Color</div>
<div class="abs" style="left:1218px;top:423px;width:61px;height:20px;box-sizing:border-box;background:#ff0000;border:1px solid #6a0000;"></div>
<div class="t t11" style="right:78.5px;top:429px;">Speed&nbsp; (mm/s)</div>
<div class="spin" style="left:1366px;top:423px;width:65px;height:20px;"><span class="vr" style="top:5px">100.0</span><span class="ud"><i class="u"></i><i class="d"></i></span></div>
<div class="t t11" style="right:226.5px;top:450px;">Priority</div>
<div class="spin" style="left:1218px;top:444px;width:61px;height:20px;"><span class="vr" style="top:5px">0</span><span class="ud"><i class="u"></i><i class="d"></i></span></div>
<div class="t t11" style="right:78.5px;top:450px;">Power Max (%)</div>
<div class="spin" style="left:1366px;top:444px;width:65px;height:20px;"><span class="vr" style="top:5px">20.00</span><span class="ud"><i class="u"></i><i class="d"></i></span></div>
<div class="t t11" style="right:78.5px;top:471px;">Power Min (%)</div>
<div class="spin" style="left:1366px;top:465px;width:65px;height:20px;"><span class="vr" style="top:5px">0.00</span><span class="ud"><i class="u"></i><i class="d"></i></span></div>
<div class="abs" style="left:1113px;top:490px;width:47px;height:20px;background:#fff;"></div>
<div class="abs" style="left:1160px;top:490px;width:276px;height:1px;background:#dadada;"></div>
<div class="abs" style="left:1160px;top:490px;width:1px;height:19px;background:#dcdcdc;"></div>
<div class="abs" style="left:1209px;top:491px;width:1px;height:18px;background:#e0e0e0;"></div>
<div class="abs" style="left:1161px;top:508px;width:110px;height:1px;background:linear-gradient(90deg,#dcdcdc 0,#dcdcdc 80%,#f0f0f0 100%);"></div>
<div class="t t11" style="left:1124.5px;top:495.5px;">Cuts</div>
<div class="t t11" style="left:1170.5px;top:494.5px;">Move</div>
<div class="t t11" style="left:1220.5px;top:494.5px;letter-spacing:-0.2px;">Console</div>
<div class="abs" style="left:1113px;top:516px;width:323px;height:19px;box-sizing:border-box;background:#dadada;border:1px solid #c2c2c2;"></div><div class="t t11" style="left:1117px;top:522px;">Laser</div><svg style="left:1407px;top:521px" width="10" height="10" viewBox="0 0 10 10"><path d="M3.5 0.8H9V5.6H7M3.5 0.8V3" fill="none" stroke="#000" stroke-width="1.5"/><rect x="1" y="3.6" width="5.6" height="5" fill="none" stroke="#000" stroke-width="1.2"/><path d="M1 4H6.6" stroke="#000" stroke-width="1.8"/></svg><svg style="left:1423px;top:521px" width="10" height="10" viewBox="0 0 10 10"><path d="M1 1L8.6 8.6M8.6 1L1 8.6" stroke="#000" stroke-width="1.6" fill="none"/></svg>
<div class="t t11" style="left:1113.5px;top:541px;">Ready</div>
<div class="btn" style="left:1115px;top:555px;width:103px;height:30px;"></div>
<div class="btn" style="left:1223px;top:555px;width:104px;height:30px;"></div>
<div class="btn" style="left:1332px;top:555px;width:103px;height:30px;"></div>
<svg style="left:1145px;top:562px" width="15" height="16" viewBox="0 0 15 16"><path d="M0 0L14.4 8L0 16Z" fill="#000"/></svg>
<div class="t t11" style="left:1163.5px;top:565.5px;">Start</div>
<svg style="left:1251px;top:562px" width="14" height="16" viewBox="0 0 14 16"><path d="M0 0H5.2V16H0ZM8.4 0H13.6V16H8.4Z" fill="#000"/></svg>
<div class="t t11" style="left:1269px;top:565.5px;letter-spacing:-0.2px;">Pause</div>
<div class="abs" style="left:1362px;top:562px;width:15.5px;height:16px;background:#000;"></div>
<div class="t t11" style="left:1381.5px;top:565.5px;">Stop</div>
<div class="btn" style="left:1115px;top:588px;width:76px;height:21px;"></div>
<div class="btn" style="left:1196px;top:588px;width:77px;height:21px;"></div>
<div class="btn" style="left:1278px;top:588px;width:76px;height:21px;"></div>
<div class="btn" style="left:1359px;top:588px;width:76px;height:21px;"></div>
<div class="t t11" style="left:1122.5px;top:594px;letter-spacing:-0.35px;">Save GCode</div>
<div class="t t11" style="left:1206px;top:594px;letter-spacing:-0.3px;">Run GCode</div>
<svg style="left:1291px;top:591px" width="16" height="16" viewBox="0 0 16 16"><path d="M1 5.2V1H5.2M10.8 1H15V5.2M15 10.8V15H10.8M5.2 15H1V10.8" fill="none" stroke="#000" stroke-width="2"/></svg>
<div class="t t11" style="left:1310.5px;top:594.5px;letter-spacing:-0.2px;">Frame</div>
<svg style="left:1372px;top:591px" width="16" height="16" viewBox="0 0 16 16"><circle cx="8" cy="8" r="6.8" fill="none" stroke="#000" stroke-width="2" stroke-dasharray="5.6 3.3" stroke-dashoffset="1.2"/></svg>
<div class="t t11" style="left:1391.5px;top:594.5px;letter-spacing:-0.2px;">Frame</div>
<div class="t t11" style="right:167px;top:618px;">Start From:</div>
<div class="btn" style="left:1278px;top:613px;width:157px;height:19px;"></div><div class="t t11" style="left:1282px;top:618px;letter-spacing:-0.15px;">Absolute Coords</div><svg style="left:1421px;top:621px" width="8" height="5" viewBox="0 0 8 5"><path d="M0.2 0.3H7.8L4 4.6Z" fill="#000"/></svg>
<svg style="left:1114px;top:639px" width="16" height="10" viewBox="0 0 16 10"><rect x="0" y="0" width="16" height="10" rx="3.4" fill="#16a616"/><rect x="9.2" y="1.6" width="5.4" height="6.8" rx="1.4" fill="#fff"/></svg>
<div class="t t11" style="left:1135.5px;top:639.5px;letter-spacing:-0.15px;">Optimize Cut Path</div>
<div class="btn" style="left:1279px;top:634px;width:156px;height:21px;"></div>
<div class="t t11" style="left:1279px;top:639.5px;width:156px;text-align:center;letter-spacing:-0.1px;">Optimization Settings</div>
<svg style="left:1114px;top:660px" width="16" height="10" viewBox="0 0 16 10"><rect x="0" y="0" width="16" height="10" rx="3.4" fill="#a40808"/><rect x="1.4" y="1.6" width="6" height="6.8" rx="1.6" fill="#fff"/></svg>
<div class="t t11" style="left:1135.5px;top:660.5px;letter-spacing:-0.25px;">Cut Selected Graphics</div>
<svg style="left:1114px;top:677.5px" width="16" height="10" viewBox="0 0 16 10"><rect x="0" y="0" width="16" height="10" rx="3.4" fill="#868686"/><rect x="1.4" y="1.6" width="6" height="6.8" rx="1.6" fill="#fff"/></svg>
<div class="t t11 gray" style="left:1135.5px;top:677.5px;letter-spacing:-0.25px;">Use Selection Origin</div>
<div class="abs" style="left:1113px;top:691px;width:323px;height:1px;background:#a8a8a8;"></div>
<div class="abs" style="left:1113px;top:692px;width:323px;height:1px;background:#fafafa;"></div>
<div class="btn" style="left:1115px;top:696px;width:73px;height:21px;"></div>
<div class="t t11" style="left:1115px;top:702px;width:73px;text-align:center;letter-spacing:-0.15px;">Devices</div>
<div class="btn" style="left:1195px;top:696px;width:118px;height:20px;"></div><div class="t t11" style="left:1199px;top:701px;">(Auto)</div><svg style="left:1299px;top:704px" width="8" height="5" viewBox="0 0 8 5"><path d="M0.2 0.3H7.8L4 4.6Z" fill="#000"/></svg>
<div class="btn" style="left:1319px;top:696px;width:117px;height:20px;"></div><div class="t t11" style="left:1323px;top:701px;letter-spacing:-0.65px;">C3D (GRBL)</div><svg style="left:1422px;top:704px" width="8" height="5" viewBox="0 0 8 5"><path d="M0.2 0.3H7.8L4 4.6Z" fill="#000"/></svg>
<svg style="left:1424px;top:908px" width="12" height="12" viewBox="0 0 12 12"><g fill="#b8b8b8"><rect x="9" y="1" width="2" height="2"/><rect x="9" y="5" width="2" height="2"/><rect x="9" y="9" width="2" height="2"/><rect x="5" y="5" width="2" height="2"/><rect x="5" y="9" width="2" height="2"/><rect x="1" y="9" width="2" height="2"/></g></svg>

<!-- palette -->
<div id="pal">
<div class="abs palgrip" style="left:5px;top:878px;width:2px;height:2px;background:#bdbdbd;"></div><div class="abs palgrip" style="left:5px;top:882px;width:2px;height:2px;background:#bdbdbd;"></div><div class="abs palgrip" style="left:5px;top:886px;width:2px;height:2px;background:#bdbdbd;"></div><div class="abs palgrip" style="left:5px;top:890px;width:2px;height:2px;background:#bdbdbd;"></div><div class="abs palgrip" style="left:5px;top:894px;width:2px;height:2px;background:#bdbdbd;"></div>
<div class="abs" style="left:14px;top:878px;width:18px;height:18px;background:#5a1616;"></div>
<div class="abs" style="left:39px;top:878px;width:18px;height:18px;background:#961818;"></div>
<div class="abs" style="left:64px;top:878px;width:18px;height:18px;background:#cc1414;"></div>
<div class="abs" style="left:89px;top:878px;width:18px;height:18px;background:#ff0c0c;"></div>
<div class="abs" style="left:114px;top:878px;width:18px;height:18px;background:#5a4614;"></div>
<div class="abs" style="left:139px;top:878px;width:18px;height:18px;background:#906818;"></div>
<div class="abs" style="left:164px;top:878px;width:18px;height:18px;background:#cc8c10;"></div>
<div class="abs" style="left:189px;top:878px;width:18px;height:18px;background:#ffa808;"></div>
<div class="abs" style="left:214px;top:878px;width:18px;height:18px;background:#165a16;"></div>
<div class="abs" style="left:239px;top:878px;width:18px;height:18px;background:#1c8c1c;"></div>
<div class="abs" style="left:264px;top:878px;width:18px;height:18px;background:#14c814;"></div>
<div class="abs" style="left:289px;top:878px;width:18px;height:18px;background:#08ff08;"></div>
<div class="abs" style="left:314px;top:878px;width:18px;height:18px;background:#145a5a;"></div>
<div class="abs" style="left:339px;top:878px;width:18px;height:18px;background:#1a9090;"></div>
<div class="abs" style="left:364px;top:878px;width:18px;height:18px;background:#14c8c8;"></div>
<div class="abs" style="left:389px;top:878px;width:18px;height:18px;background:#08ffff;"></div>
<div class="abs" style="left:414px;top:878px;width:18px;height:18px;background:#14145a;"></div>
<div class="abs" style="left:439px;top:878px;width:18px;height:18px;background:#181890;"></div>
<div class="abs" style="left:464px;top:878px;width:18px;height:18px;background:#1010cc;"></div>
<div class="abs" style="left:489px;top:878px;width:18px;height:18px;background:#0808ff;"></div>
<div class="abs" style="left:514px;top:878px;width:18px;height:18px;background:#5a145a;"></div>
<div class="abs" style="left:539px;top:878px;width:18px;height:18px;background:#901890;"></div>
<div class="abs" style="left:564px;top:878px;width:18px;height:18px;background:#c814c8;"></div>
<div class="abs" style="left:589px;top:878px;width:18px;height:18px;background:#ff08ff;"></div>
<div class="abs" style="left:611px;top:875px;width:23px;height:23px;background:#cce4f7;border:1px solid #99c9ef;"></div>
<div class="abs" style="left:614px;top:878px;width:18px;height:18px;background:#000000;"></div>
<div class="abs" style="left:639px;top:878px;width:18px;height:18px;background:#2c2c2c;"></div>
<div class="abs" style="left:664px;top:878px;width:18px;height:18px;background:#585858;"></div>
<div class="abs" style="left:689px;top:878px;width:18px;height:18px;background:#808080;"></div>
<div class="abs" style="left:714px;top:878px;width:18px;height:18px;background:#a4a4a4;"></div>
<div class="abs" style="left:739px;top:878px;width:18px;height:18px;background:#cccccc;"></div>
</div>
<div class="t t11" style="left:3px;top:907px;font-size:11.5px;letter-spacing:-0.17px">x: 181.00, y: 160.00 mm</div>
<div class="abs" style="left:473px;top:902px;width:1px;height:17px;background:#dcdcdc;"></div>
<div class="abs" style="left:1418px;top:902px;width:1px;height:17px;background:#dcdcdc;"></div>

</div>
</body></html>
